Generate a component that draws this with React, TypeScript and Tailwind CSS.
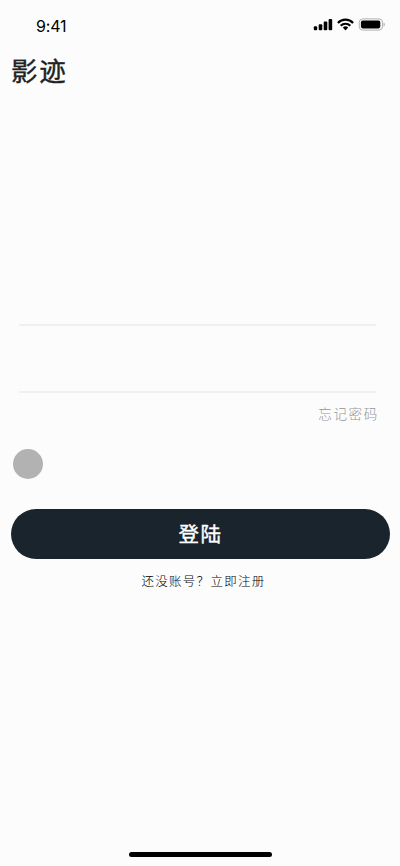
function StatusIcons() {
  return (
    <svg width="72" height="14" viewBox="0 0 72 14" fill="none">
      <g fill="#000">
        <rect x="0.8" y="8.2" width="3.4" height="4" rx="1" />
        <rect x="5.7" y="6.2" width="3.6" height="6" rx="1" />
        <rect x="10.7" y="3.6" width="3.6" height="8.6" rx="1" />
        <rect x="15.6" y="0.9" width="3.6" height="11.3" rx="1" />
      </g>
      <g stroke="#000" strokeWidth="2.2">
        <path d="M24.9 4.9a10.5 10.5 0 0 1 15.2 0" />
        <path d="M27.7 7.8a6.6 6.6 0 0 1 9.6 0" />
      </g>
      <path d="M29.8 9.6a4 4 0 0 1 5.4 0l-2.7 2.8z" fill="#000" />
      <rect x="46.3" y="0.9" width="23.2" height="11.2" rx="3.4" stroke="#b0b0b0" />
      <rect x="47.9" y="2.6" width="19.4" height="7.8" rx="1.8" fill="#000" />
      <path d="M70.6 4.5v4c1.6-.7 1.6-3.3 0-4z" fill="#b0b0b0" />
    </svg>
  );
}

export default function App() {
  return (
    <div className="flex h-[866px] w-[400px] flex-col overflow-hidden bg-[#fcfcfc] font-['Inter','Noto_Sans_CJK_SC',sans-serif] text-[#222]">
      {/* Status bar */}
      <header className="flex h-[49px] items-start justify-between pt-[18px] pr-[15px] pl-9">
        <span className="text-base leading-4 tracking-[-0.2px] text-black">9:41</span>
        <StatusIcons />
      </header>

      <h1 className="pl-[11px] text-[26.5px] leading-[44px] tracking-[1.8px] [-webkit-text-stroke:0.4px_#222]">影迹</h1>

      {/* Login form */}
      <form className="mt-[166px] flex flex-col">
        <input aria-label="账号" className="mr-6 ml-[19px] h-[67px] border-b-2 border-[#f0f0f0] bg-transparent outline-none" />
        <input aria-label="密码" type="password" className="mr-6 ml-[19px] h-[67px] border-b-2 border-[#f0f0f0] bg-transparent outline-none" />
        <a className="mt-[11px] mr-[21px] self-end text-[13.5px] leading-5 font-light tracking-[1.7px] text-[#949494]">忘记密码</a>
        <span className="mt-[25.4px] ml-[13px] size-[30px] rounded-full bg-[#b2b2b2]" />
        <button
          type="button"
          className="mr-2.5 ml-[11px] mt-[29.6px] h-[50px] rounded-full bg-[#19242c] pt-[3px] text-[20.5px] tracking-[1.5px] text-white [-webkit-text-stroke:0.4px_#fff]"
        >
          登陆
        </button>
      </form>
      <p className="mt-[13px] pl-[7px] text-center text-[12.5px] leading-5 font-light tracking-[1.3px] text-black">还没账号？立即注册</p>

      {/* Home indicator */}
      <div className="mt-auto mb-[9px] h-[5px] w-[143px] self-center rounded-full bg-black" />
    </div>
  );
}
